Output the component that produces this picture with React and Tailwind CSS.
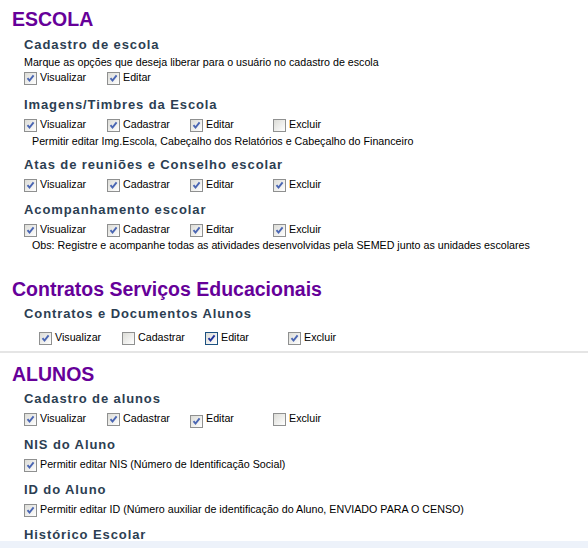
import React from "react";

const title = "px-3 text-[19.5px] font-bold leading-[22px] text-[#660099]";
const heading = "pl-6 text-[13px] font-bold leading-[16px] tracking-[0.9px] text-[#2c3e52]";
const note = "text-[10.7px] leading-[14px] text-black";

function Box({ checked, active }) {
  return (
    <span
      className={
        active
          ? "mt-[2px] flex h-[13px] w-[13px] shrink-0 items-center justify-center border border-[#1c5180] bg-gradient-to-br from-[#dcdcd7] to-white"
          : "mt-[2px] flex h-[13px] w-[13px] shrink-0 items-center justify-center border border-[#8f9090] bg-gradient-to-br from-[#dcdcd7] to-white"
      }
    >
      {checked && (
        <svg width="9" height="9" viewBox="0 0 9 9">
          <path
            d="M1.5 4.2 L3.5 6.6 L7.6 1.4"
            fill="none"
            stroke={active ? "#21349c" : "#4a66b3"}
            strokeWidth="1.9"
          />
        </svg>
      )}
    </span>
  );
}

function Check({ label, checked = true, active, low, wide }) {
  return (
    <label className={wide ? "flex items-start gap-[3px]" : "flex w-[83px] items-start gap-[3px]"}>
      <span className={low ? "mt-[2px]" : ""}>
        <Box checked={checked} active={active} />
      </span>
      <span className={note}>{label}</span>
    </label>
  );
}

function Row({ items, className = "" }) {
  return (
    <div className={"flex pl-6 " + className}>
      {items.map((it) => (
        <Check key={it.label} {...it} />
      ))}
    </div>
  );
}

const all4 = [
  { label: "Visualizar" },
  { label: "Cadastrar" },
  { label: "Editar" },
  { label: "Excluir" },
];

export default function App() {
  return (
    <div className="relative h-[548px] w-[588px] overflow-hidden bg-white pt-[8px] font-['Liberation_Sans',Arial,sans-serif]">
      {/* ESCOLA */}
      <h1 className={title}>ESCOLA</h1>

      <h2 className={heading + " mt-[7px]"}>Cadastro de escola</h2>
      <p className={note + " mt-[2px] pl-6"}>
        Marque as opções que deseja liberar para o usuário no cadastro de escola
      </p>
      <Row className="mt-[1px]" items={[{ label: "Visualizar" }, { label: "Editar" }]} />

      <h2 className={heading + " mt-[12px]"}>Imagens/Timbres da Escola</h2>
      <Row
        className="mt-[4px]"
        items={[
          { label: "Visualizar" },
          { label: "Cadastrar" },
          { label: "Editar" },
          { label: "Excluir", checked: false },
        ]}
      />
      <p className={note + " mt-[2px] pl-8"}>
        Permitir editar Img.Escola, Cabeçalho dos Relatórios e Cabeçalho do Financeiro
      </p>

      <h2 className={heading + " mt-[9px]"}>Atas de reuniões e Conselho escolar</h2>
      <Row className="mt-[4px]" items={all4} />

      <h2 className={heading + " mt-[10px]"}>Acompanhamento escolar</h2>
      <Row className="mt-[4px]" items={all4} />
      <p className={note + " mt-[1px] pl-8"}>
        Obs: Registre e acompanhe todas as atividades desenvolvidas pela SEMED junto as unidades escolares
      </p>

      {/* Contratos */}
      <h1 className={title + " mt-[26px]"}>Contratos Serviços Educacionais</h1>
      <h2 className={heading + " mt-[6px]"}>Contratos e Documentos Alunos</h2>
      <Row
        className="mt-[8px] pl-[39px]"
        items={[
          { label: "Visualizar" },
          { label: "Cadastrar", checked: false },
          { label: "Editar", active: true },
          { label: "Excluir" },
        ]}
      />

      <div className="mt-[6px] h-[2px] w-full bg-[#e5e5e5]" />

      {/* ALUNOS */}
      <h1 className={title + " mt-[10px]"}>ALUNOS</h1>
      <h2 className={heading + " mt-[6px]"}>Cadastro de alunos</h2>
      <Row
        className="mt-[4px]"
        items={[
          { label: "Visualizar" },
          { label: "Cadastrar" },
          { label: "Editar", low: true },
          { label: "Excluir", checked: false },
        ]}
      />

      <h2 className={heading + " mt-[9px]"}>NIS do Aluno</h2>
      <Row className="mt-[4px]" items={[{ label: "Permitir editar NIS (Número de Identificação Social)", wide: true }]} />

      <h2 className={heading + " mt-[10px]"}>ID do Aluno</h2>
      <Row
        className="mt-[4px]"
        items={[
          {
            label: "Permitir editar ID (Número auxiliar de identificação do Aluno, ENVIADO PARA O CENSO)",
            wide: true,
          },
        ]}
      />

      <h2 className={heading + " mt-[10px]"}>Histórico Escolar</h2>

      {/* faixa inferior */}
      <div className="absolute bottom-0 left-0 h-[7px] w-full bg-[#edf2fa]" />
    </div>
  );
}
